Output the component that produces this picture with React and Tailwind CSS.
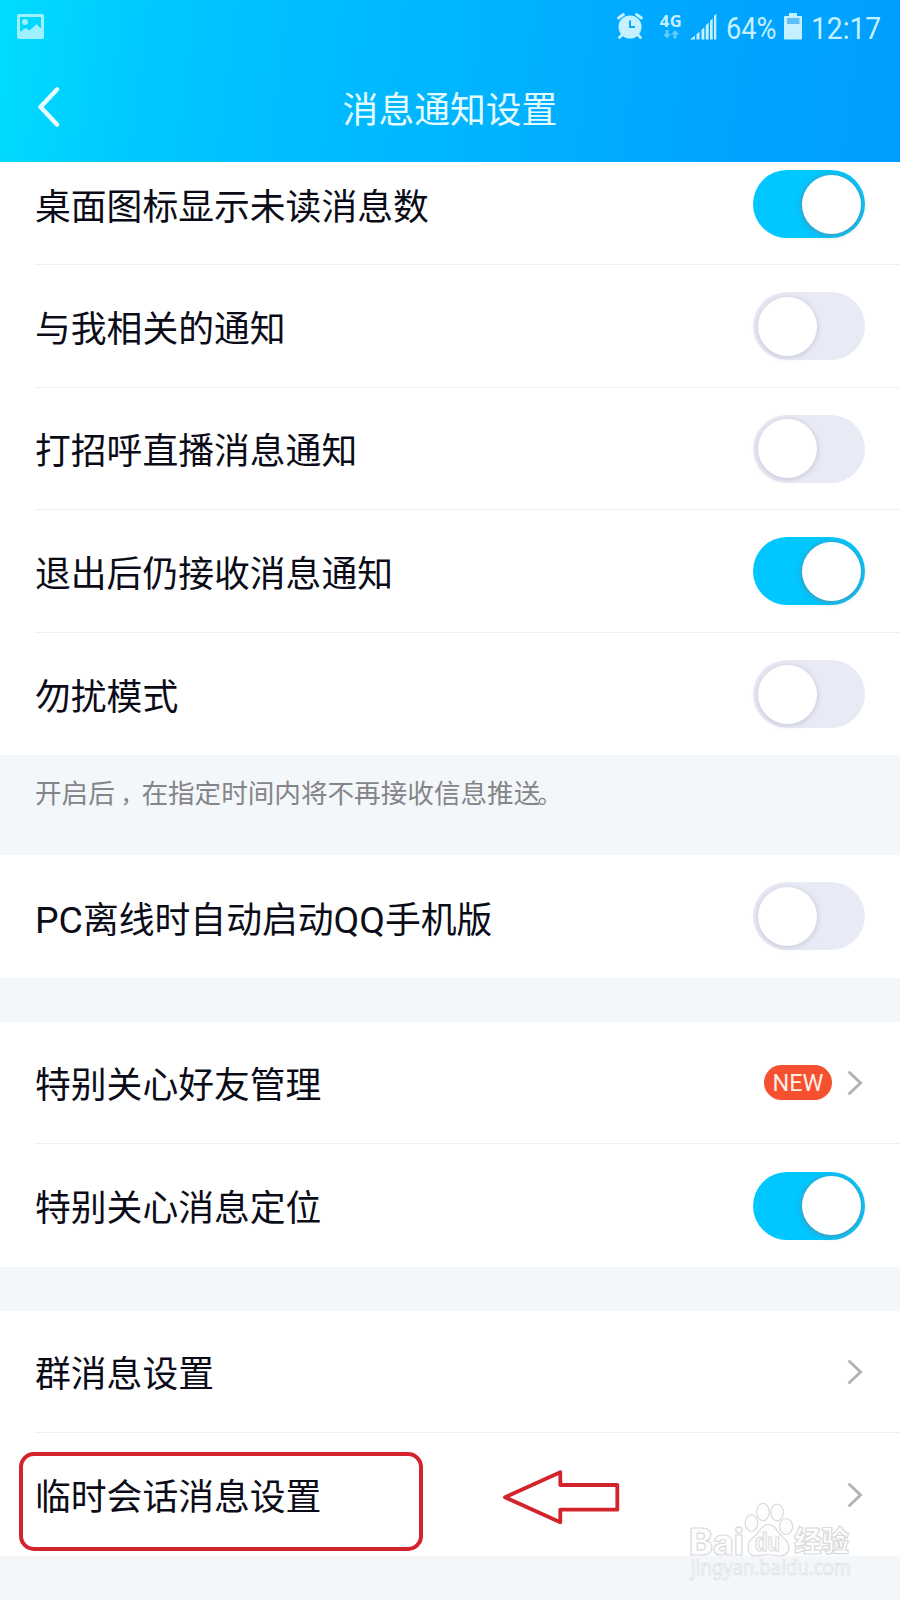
import React, { useState } from "react";
import clsx from "clsx";

function StatusBar() {
  return (
    <div className="flex h-[54px] items-start justify-between pl-[16.5px] text-[#c5f0ff]">
      {/* Screenshot saved icon */}
      <svg className="mt-[13.5px] h-[26px] w-[27px]" viewBox="0 0 27 26">
        <path
          fill="#a0f1ff"
          fillRule="evenodd"
          d="M2 0h23a2 2 0 0 1 2 2v21a2 2 0 0 1-2 2H2a2 2 0 0 1-2-2V2a2 2 0 0 1 2-2Zm1 3v15l5.500-4 4 2.500 7-6.500 4.500 4.500V3Z"
        />
        <circle cx="8" cy="8" r="3" fill="#a0f1ff" />
      </svg>

      <div className="flex items-start">
        {/* Alarm */}
        <svg className="mr-[3px] mt-[13px] h-[27px] w-[26px]" viewBox="0 0 26 27">
          <circle cx="13" cy="14" r="11.500" fill="currentColor" />
          <path
            d="M1.500 5 6.500 1.500M24.500 5 19.500 1.500M5 22 2.500 24.500M21 22l2.500 2.500"
            stroke="currentColor"
            strokeWidth="2.800"
            strokeLinecap="round"
          />
          <path d="M13 7.500v6.500h5" fill="none" stroke="#12a9fb" strokeWidth="2" />
        </svg>

        {/* Network type */}
        <div className="ml-[14px] mt-[12px] flex w-[22px] flex-col items-center">
          <span className="font-['Open_Sans',sans-serif] text-[16.500px] font-bold leading-[18px] tracking-[0.5px]">4G</span>
          <svg className="h-[9px] w-[16px]" viewBox="0 0 16 9">
            <path
              d="M2.500 0h3v4h2.500L4 8.500 0 4h2.500ZM10.500 8.500h3v-4H16L12 0 8 4.500h2.500Z"
              fill="#62caff"
            />
          </svg>
        </div>

        {/* Signal */}
        <svg className="ml-[7px] mt-[13px] h-[27px] w-[28px]" viewBox="0 0 28 27">
          <path
            fill="currentColor"
            d="M1 26.500 6 22.500v4ZM7.500 21.300l3-2.500v7.700h-3ZM12.500 16.800l2.800-2.400v12.100h-2.800ZM16.700 12.500l3-3v17h-3ZM21 8l2.700-2.400v20.900H21ZM25 3l2.300-2.500v26H25Z"
          />
        </svg>

        <div className="ml-[9px] mt-[8.500px] w-[52px] font-[Roboto,sans-serif] text-[32px] leading-[38px]">
          <span className="inline-block origin-left scale-x-[0.85]">64%</span>
        </div>

        {/* Battery */}
        <svg className="ml-[6px] mt-[13px] h-[27px] w-[18px]" viewBox="0 0 18 27">
          <path fill="currentColor" d="M5 0h8v3h4a1 1 0 0 1 1 1v21.500a1 1 0 0 1-1 1H1a1 1 0 0 1-1-1V4a1 1 0 0 1 1-1h4Z" />
          <path fill="#5fc0f5" d="M3 5h12.500v6H3Z" />
        </svg>

        <div className="ml-[9px] mt-[8.500px] w-[89px] font-[Roboto,sans-serif] text-[32px] leading-[38px]">
          <span className="inline-block origin-left scale-x-[0.88]">12:17</span>
        </div>
      </div>
    </div>
  );
}

function Header() {
  return (
    <header className="h-[162px] w-full bg-[linear-gradient(97deg,#00dcff_0%,#00c8ff_17%,#00bdff_33%,#00b3ff_55%,#00a5ff_78%,#009eff_100%)]">
      <StatusBar />
      <div className="grid h-[106px] grid-cols-3 items-center">
        <button className="pl-[37px]">
          <svg className="h-[42px] w-[24px]" viewBox="0 0 24 42">
            <path
              d="M20 3.500 3.500 21 20 38.500"
              fill="none"
              stroke="#e6fcff"
              strokeWidth="4.500"
              strokeLinecap="round"
              strokeLinejoin="round"
            />
          </svg>
        </button>
        <h1 className="whitespace-nowrap pt-[9px] text-center text-[35.800px] leading-none text-[#e4fbff]">消息通知设置</h1>
      </div>
    </header>
  );
}

function Toggle({ initial }) {
  const [on, setOn] = useState(initial);

  return (
    <button
      onClick={() => setOn(!on)}
      className={clsx(
        "mt-px flex h-[68px] w-[112px] items-center rounded-full px-[4.500px]",
        on ? "justify-end bg-[#00c7ff]" : "justify-start bg-[#e8ebf5]"
      )}
    >
      <span
        className={clsx(
          "h-[59px] w-[59px] rounded-full bg-white",
          on ? "shadow-[0_1px_5px_1px_rgba(110,125,140,0.6)]" : "shadow-[0_1px_5px_1px_rgba(150,145,165,0.35)]"
        )}
      />
    </button>
  );
}

function Chevron() {
  return (
    <svg className="mr-[2px] mt-[2px] h-[26px] w-[16px]" viewBox="0 0 16 26">
      <path
        d="M2.500 2.500 13.500 13 2.500 23.500"
        fill="none"
        stroke="#b3b3b7"
        strokeWidth="3"
        strokeLinecap="round"
      />
    </svg>
  );
}

function Row({ label, last, className = "h-[122.500px]", children }) {
  return (
    <div className="bg-white pl-[35px]">
      <div
        className={clsx(
          "flex items-center justify-between pr-[35px]",
          className,
          !last && "border-b border-[#efeff1]"
        )}
      >
        <span className="whitespace-nowrap pt-[10px] text-[35.800px] leading-none text-[#0b0c18]">{label}</span>
        {children}
      </div>
    </div>
  );
}

function Watermark() {
  return (
    <svg
      className="absolute left-[686px] top-[67px] h-[92px] w-[172px] overflow-visible"
      viewBox="0 0 172 92"
      fill="#fdfdfe"
      stroke="#d9dadc"
      strokeWidth="1.200"
    >
      <text x="3" y="55" fontSize="37" fontWeight="800" fontFamily="Inter, sans-serif" textLength="55" lengthAdjust="spacingAndGlyphs">Bai</text>
      {/* Paw */}
      <ellipse cx="65.500" cy="23" rx="6.300" ry="8.300" />
      <ellipse cx="77" cy="12" rx="6.300" ry="8.600" />
      <ellipse cx="91" cy="12.500" rx="6.300" ry="8.300" />
      <ellipse cx="100" cy="26.500" rx="6.600" ry="8" />
      <path d="M82 24.500c7 0 8.500 6 12 10 4.500 4.500 9 7 9 13s-4.500 8.500-9 8.500c-5 0-7-1.500-12-1.500S74 56 70 56c-5 0-8-3-8-9s4-8.500 8.500-12.500c4-4 5.500-10 11.500-10Z" />
      <text x="69" y="51" fontSize="25" fontWeight="bold" fontFamily="Liberation Sans" textLength="25" lengthAdjust="spacingAndGlyphs">du</text>
      <text x="108" y="52" fontSize="29" fontWeight="900" fontFamily="Noto Sans CJK SC" textLength="55" lengthAdjust="spacingAndGlyphs">经验</text>
      <text x="5" y="75" fontSize="21" fontFamily="Noto Sans" strokeWidth="0.700" textLength="160" lengthAdjust="spacingAndGlyphs">jingyan.baidu.com</text>
    </svg>
  );
}

export default function App() {
  return (
    <div className="h-[1600px] w-[900px] overflow-hidden bg-[#f4f7fa] font-[Roboto,'Noto_Sans_CJK_SC',sans-serif]">
      <Header />

      <section>
        <Row label="桌面图标显示未读消息数" className="h-[103px] pb-[19px]">
          <Toggle initial={true} />
        </Row>
        <Row label="与我相关的通知">
          <Toggle initial={false} />
        </Row>
        <Row label="打招呼直播消息通知">
          <Toggle initial={false} />
        </Row>
        <Row label="退出后仍接收消息通知">
          <Toggle initial={true} />
        </Row>
        <Row label="勿扰模式" last>
          <Toggle initial={false} />
        </Row>
      </section>

      <p className="h-[100px] pl-[35px] pt-[21px] text-[26.600px] leading-[36px] text-[#858589]">
        开启后<span className="ml-[6px] text-[20.600px] font-medium">，</span>在指定时间内将不再接收信息推送
        <span className="-ml-[2.500px] text-[23px]">。</span>
      </p>

      <section>
        <Row
          label={
            <>
              <span className="text-[37.400px]">PC</span>离线时自动启动<span className="text-[37.400px]">QQ</span>手机版
            </>
          }
          last
          className="h-[122.500px] pb-[1.500px]"
        >
          <Toggle initial={false} />
        </Row>
      </section>

      <section className="mt-[44px]">
        <Row label="特别关心好友管理">
          <div className="flex items-center gap-[15px]">
            <span className="flex h-[35px] w-[68px] items-center justify-center rounded-full bg-[#f5502f] pt-[2px] text-[23.500px] leading-none text-[#ffeee6]">
              NEW
            </span>
            <Chevron />
          </div>
        </Row>
        <Row label="特别关心消息定位" last>
          <Toggle initial={true} />
        </Row>
      </section>

      <section className="mt-[44px]">
        <Row label="群消息设置">
          <Chevron />
        </Row>
        <div className="relative">
          <Row label="临时会话消息设置" last>
            <Chevron />
          </Row>
          {/* Highlight frame and arrow over the last row */}
          <div className="absolute left-[19px] top-[18.500px] h-[99px] w-[404px] rounded-[15px] border-4 border-[#d3242d]" />
          <svg className="absolute left-[500px] top-[34px] h-[60px] w-[124px]" viewBox="0 0 124 60">
            <path
              d="M5 30.300 60.300 5.300V18H117.300V42.700H60.300V55.300Z"
              fill="none"
              stroke="#d3242d"
              strokeWidth="3.800"
              strokeLinejoin="round"
            />
          </svg>
          <Watermark />
        </div>
      </section>
    </div>
  );
}
